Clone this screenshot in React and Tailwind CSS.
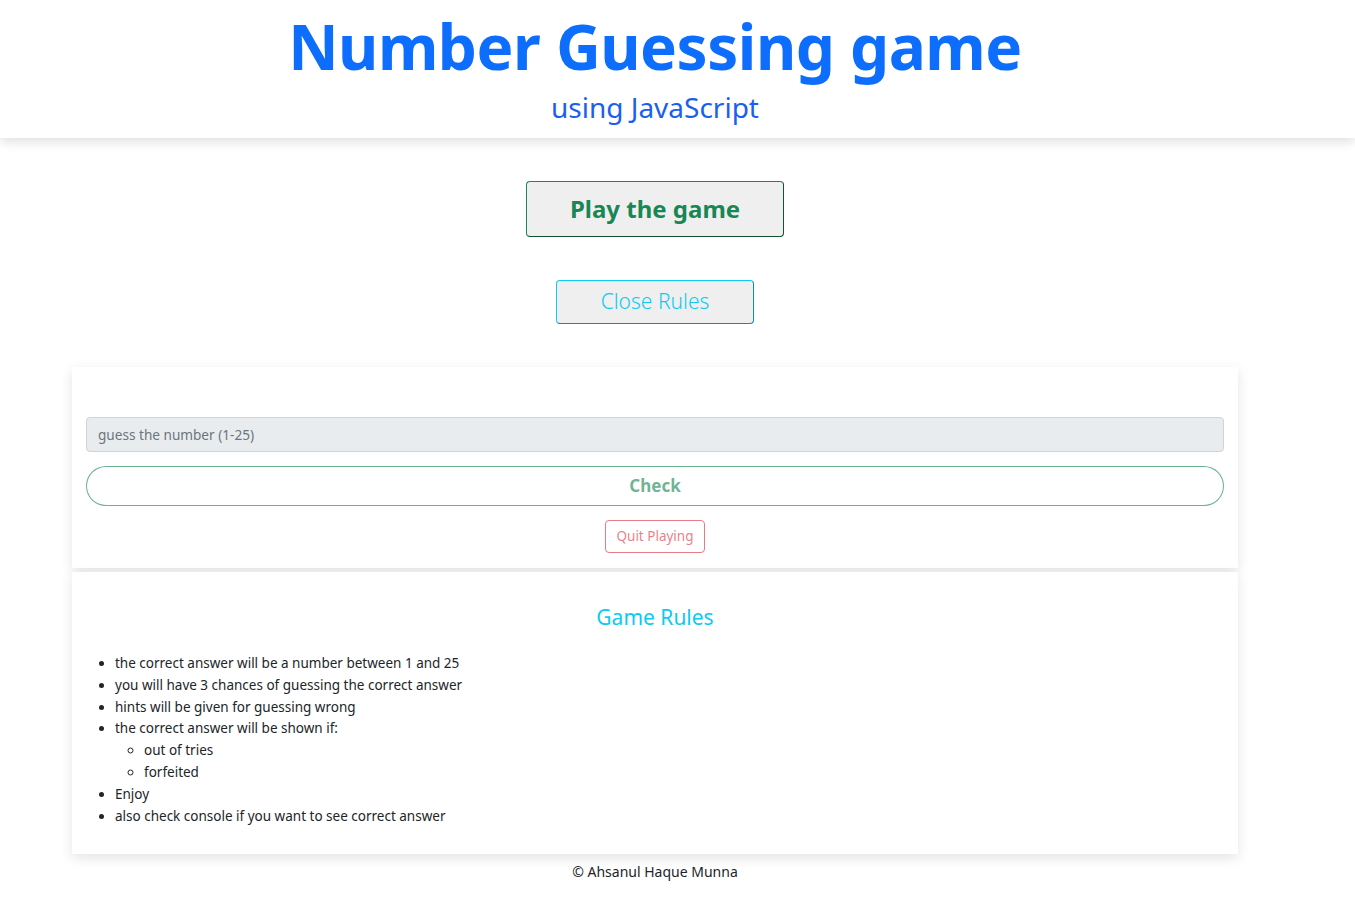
import React, { useState } from "react";

const rules = [
  "the correct answer will be a number between 1 and 25",
  "you will have 3 chances of guessing the correct answer",
  "hints will be given for guessing wrong",
];

export default function App() {
  const [guess, setGuess] = useState("");
  const [showRules, setShowRules] = useState(true);

  return (
    <div className="min-h-screen bg-white text-[#212529]" style={{ fontFamily: '"Noto Sans", "Open Sans", sans-serif' }}>
      {/* Header */}
      <header className="h-[138px] bg-white shadow-[0_4px_10px_rgba(0,0,0,0.12)]">
        <div className="w-[1310px] flex flex-col items-center">
          <h1 className="mt-[6px] text-[62px] leading-[80px] font-bold text-[#0d6efd] tracking-[-0.5px]">
            Number Guessing game
          </h1>
          <h2 className="mt-[3px] text-[28px] leading-[36px] text-[#1a5ff0]">using JavaScript</h2>
        </div>
      </header>

      <div className="w-[1310px]">
        <div className="flex flex-col items-center">
          <button className="mt-[43px] w-[258px] h-[56px] bg-[#efefef] border border-[#198754] border-r-[#0f5132] border-b-[#0f5132] rounded-[4px] text-[24px] font-bold text-[#198754]">
            Play the game
          </button>
          <button
            onClick={() => setShowRules(!showRules)}
            className="mt-[43px] w-[198px] h-[44px] bg-[#efefef] border border-[#0dcaf0] border-r-[#0a8fab] border-b-[#0a8fab] rounded-[4px] text-[21px] font-light text-[#0dcaf0]"
          >
            {showRules ? "Close Rules" : "Show Rules"}
          </button>
        </div>

        {/* Game card */}
        <div className="ml-[72px] w-[1166px] mt-[43px] bg-white shadow-[0_4px_12px_rgba(0,0,0,0.11)] px-[14px] pt-[50px] pb-[15px] flex flex-col items-center">
          <input
            value={guess}
            onChange={(e) => setGuess(e.target.value)}
            placeholder="guess the number (1-25)"
            className="w-full h-[35px] bg-[#e9ecef] border border-[#ced4da] rounded-[4px] px-[11px] text-[13.6px] placeholder:text-[#6c757d] outline-none"
          />
          <button className="mt-[14px] w-full h-[40px] rounded-full border border-[#198754]/65 text-[#198754]/65 font-bold text-[17px] bg-white">
            Check
          </button>
          <button className="mt-[14px] w-[100px] h-[33px] rounded-[4px] border border-[#dc3545]/65 text-[#dc3545]/65 text-[13.5px]">
            Quit Playing
          </button>
        </div>

        {/* Rules card */}
        {showRules && (
          <div className="ml-[72px] w-[1166px] mt-[4px] bg-white shadow-[0_4px_12px_rgba(0,0,0,0.11)] px-[14px] pt-[30px] pb-[27px]">
            <h3 className="text-center text-[21px] leading-[30px] text-[#0dcaf0]">Game Rules</h3>
            <ul className="mt-[21px] list-disc pl-[29px] text-[13.5px] leading-[21.8px]">
              {rules.map((r) => (
                <li key={r}>{r}</li>
              ))}
              <li>
                the correct answer will be shown if:
                <ul className="list-[circle] pl-[29px]">
                  <li>out of tries</li>
                  <li>forfeited</li>
                </ul>
              </li>
              <li>Enjoy</li>
              <li>also check console if you want to see correct answer</li>
            </ul>
          </div>
        )}

        <footer className="mt-[8px] text-center text-[14px] leading-[20px]">© Ahsanul Haque Munna</footer>
      </div>
    </div>
  );
}
